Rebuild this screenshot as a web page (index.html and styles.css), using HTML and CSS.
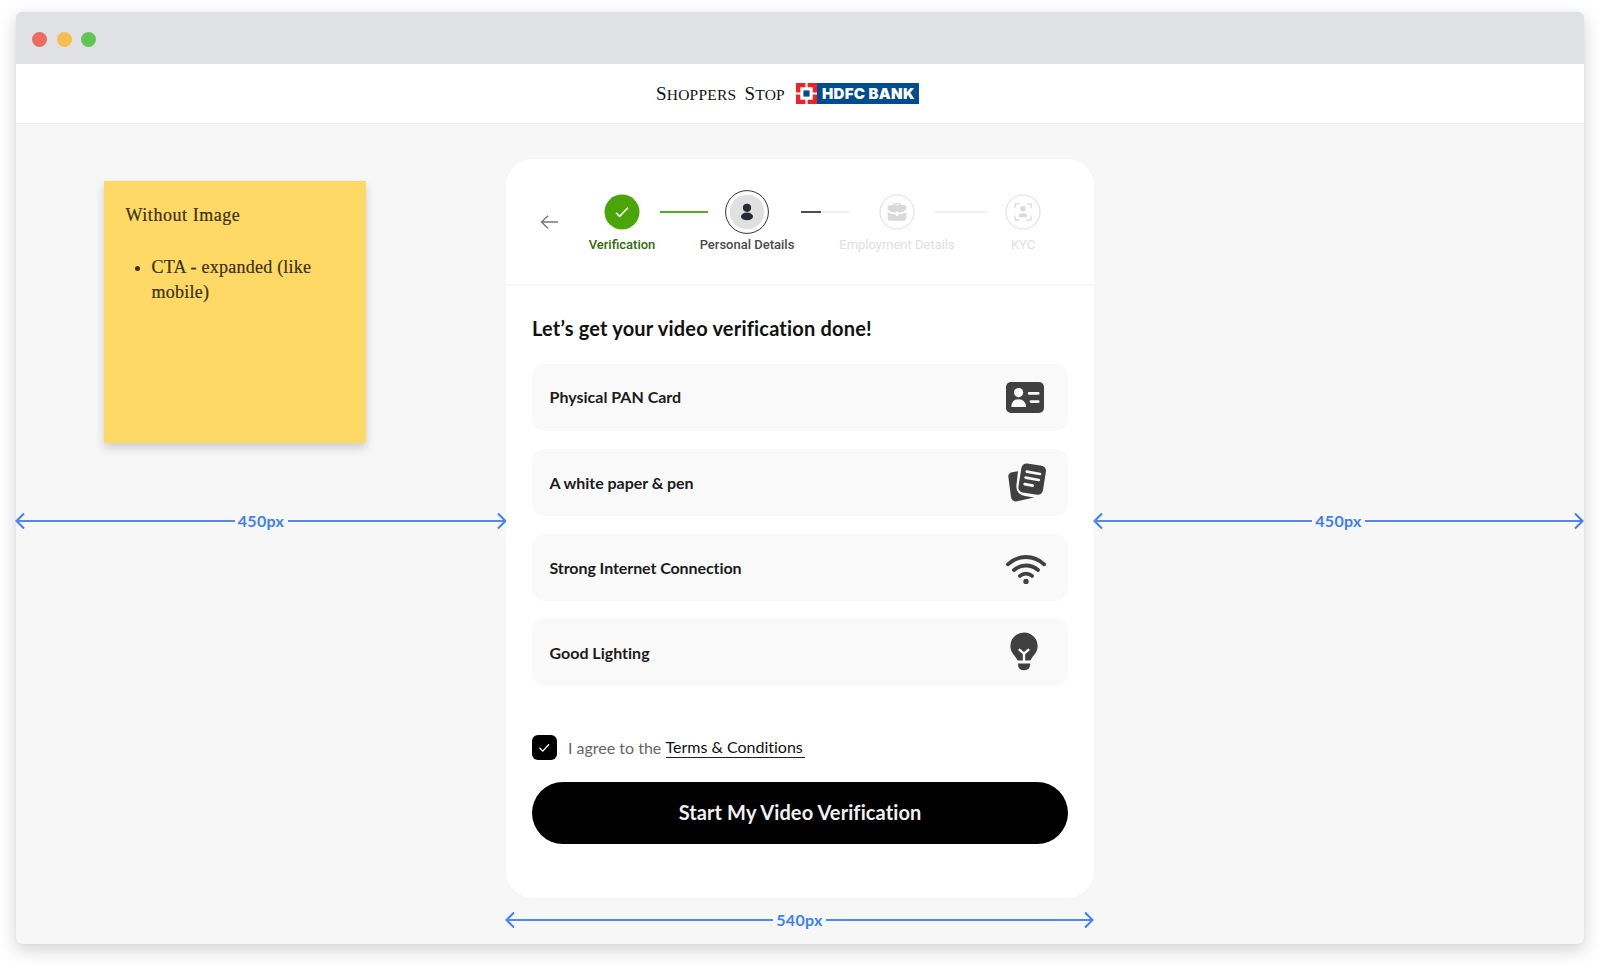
FILE: index.html
```html
<!DOCTYPE html>
<html lang="en">
<head>
<meta charset="utf-8">
<title>Video verification</title>
<link rel="stylesheet" href="styles.css">
</head>
<body>
<div class="window">
  <div class="titlebar"><i class="dot red"></i><i class="dot amber"></i><i class="dot green"></i></div>
  <header class="brand">
    <span class="shoppers"><b>S</b>hoppers <b>S</b>top</span>
    <span class="hdfc">
      <svg width="21" height="21" viewBox="0 0 21 21"><path fill="#ed232a" d="M0 0h21v21H0z"/><path fill="#fff" d="M9.4 0h2.2v21H9.4zM0 9.4h21v2.2H0z"/><path fill="#fff" d="M4.3 4.3h12.4v12.4H4.3z"/><path fill="#004c8f" d="M7.4 7.4h6.2v6.2H7.4z"/></svg>
      <span class="hdfc-name">HDFC BANK</span>
    </span>
  </header>
  <main class="canvas">
    <aside class="side left">
      <div class="note">
        <p>Without Image</p>
        <ul><li>CTA - expanded (like<br>mobile)</li></ul>
      </div>
      <div class="measure">
        <svg class="head" width="10" height="18" viewBox="0 0 10 18"><path d="M9 1.5 1.5 9 9 16.5"/></svg><i class="rule"></i><span>450px</span><i class="rule"></i><svg class="head" width="10" height="18" viewBox="0 0 10 18"><path d="M1 1.5 8.5 9 1 16.5"/></svg>
      </div>
    </aside>
    <div class="center">
      <section class="card">
        <div class="steps">
          <svg class="back" width="19" height="16" viewBox="0 0 19 16"><path d="M18 8H1.5M8 1.8 1.5 8 8 14.2"/></svg>
          <div class="step done"><div class="ring"><svg width="44" height="44" viewBox="0 0 44 44"><circle cx="22" cy="22" r="17.5" fill="#4aa508"/><path d="M16 22.8l3.6 3.6 8.4-8.6" fill="none" stroke="#fff" stroke-width="1.6"/></svg></div><span>Verification</span></div>
          <i class="link full"></i>
          <div class="step active"><div class="ring"><svg width="44" height="44" viewBox="0 0 44 44"><circle cx="22" cy="22" r="21.4" fill="#fff" stroke="#333" stroke-width="1"/><circle cx="22" cy="22" r="17.3" fill="#e0e0e0"/><circle cx="22" cy="17.8" r="4.1" fill="#262a33"/><ellipse cx="22" cy="26.4" rx="6" ry="3.9" fill="#262a33"/></svg></div><span>Personal Details</span></div>
          <i class="link half"></i>
          <div class="step todo"><div class="ring"><svg width="44" height="44" viewBox="0 0 44 44"><circle cx="22" cy="22" r="17" fill="#fff" stroke="#dcdcdc"/><path d="M18.4 16v-.8q0-1.500 1.500-1.500h4.200q1.500 0 1.500 1.500v.8" fill="none" stroke="#d9d9d9" stroke-width="1.500"/><path fill="#d9d9d9" d="M14.800 15.300h14.400q2.300 0 2.300 2.300v2.200q-3.500 2.700-7.500 3-.6-1.400-2-1.400t-2 1.400q-4-.3-7.500-3v-2.200q0-2.300 2.300-2.300z"/><path fill="#d9d9d9" d="M12.700 22.300q3.500 1.800 7.600 2 .5 1.700 1.700 1.700t1.700-1.700q4.100-.2 7.600-2v6.200q-.1 2.200-2.300 2.200H15q-2.200 0-2.300-2.200z"/></svg></div><span>Employment Details</span></div>
          <i class="link none"></i>
          <div class="step todo"><div class="ring"><svg width="44" height="44" viewBox="0 0 44 44"><circle cx="22" cy="22" r="17" fill="#fff" stroke="#dcdcdc"/><path d="M18.500 13.800H14v4.500M25.500 13.800H30v4.500M18.500 30H14v-4.500M25.500 30H30v-4.500" fill="none" stroke="#d9d9d9" stroke-width="1.300" stroke-linejoin="round"/><circle cx="22" cy="18.800" r="2.700" fill="#d9d9d9"/><path fill="#d9d9d9" d="M18 27.300V26q0-2.800 2.800-2.800h2.400q2.800 0 2.800 2.800v1.300z"/></svg></div><span>KYC</span></div>
        </div>
        <div class="body">
          <h1>Let’s get your video verification done!</h1>
          <ul class="items">
            <li><span class="t1">Physical PAN Card</span>
              <svg width="44" height="45" viewBox="0 0 44 45"><rect x="2" y="7" width="38" height="31" rx="5" fill="#404040"/><circle cx="14.6" cy="17.6" r="4.6" fill="#f9f9f9"/><path fill="#f9f9f9" d="M7.3 32q.4-7.7 7.3-7.7T22 32z"/><path d="M25.2 18.4h9M27 26.6h7.2" stroke="#f9f9f9" stroke-width="2.8" stroke-linecap="round"/></svg></li>
            <li><span class="t2">A white paper &amp; pen</span>
              <svg width="44" height="45" viewBox="0 0 44 45"><path fill="#404040" d="M14 11.2 8 12.300Q4 13.200 4.300 16.600L7 37.100Q8 41.600 12 41.400L30 37.600 21 36.100Q11.300 34.100 12.500 24.600z"/><rect x="15.800" y="4.500" width="24.800" height="29.200" rx="5" fill="#404040" transform="rotate(9 28 19.100)"/><path d="M22.800 11.600 36 14M21.600 17.600 34.800 20M20.700 24.200 28.800 25.600" stroke="#f9f9f9" stroke-width="2.700" stroke-linecap="round"/></svg></li>
            <li><span class="t3">Strong Internet Connection</span>
              <svg width="44" height="45" viewBox="0 0 44 45"><g fill="none" stroke="#404040" stroke-width="3.8" stroke-linecap="round"><path d="M3.8 19.300Q12 12 22 12t18.200 7.300M10 25q5.200-4.500 12-4.500t12 4.500M16 30.900q2.500-2.200 6-2.200t6 2.200"/></g><circle cx="22" cy="36.400" r="2.700" fill="#404040"/></svg></li>
            <li><span class="t4">Good Lighting</span>
              <svg width="44" height="45" viewBox="0 0 44 45"><path fill="#404040" d="M20 3.500a13.600 13.600 0 0 1 13.600 13.700c0 5.800-3.600 8.300-6 12.300-.7 1.300-.8 2-2 2H14.400c-1.200 0-1.300-.7-2-2-2.400-4-6-6.500-6-12.300A13.600 13.600 0 0 1 20 3.500zM14 34.500h12.300q0 6.800-6.200 6.800T14 34.500z"/><path d="M15.600 20.800 20 24.600l4.400-3.800M20 24.600v7.400" fill="none" stroke="#f9f9f9" stroke-width="2.400" stroke-linecap="round"/></svg></li>
          </ul>
          <div class="agree">
            <span class="check"><svg width="25" height="25" viewBox="0 0 25 25"><path d="M7.500 12.800l3.300 3.300 6.200-6.800" fill="none" stroke="#fff" stroke-width="1.300"/></svg></span>
            <span class="lead">I agree to the</span><a>Terms &amp; Conditions</a>
          </div>
          <button class="cta">Start My Video Verification</button>
        </div>
      </section>
      <div class="measure">
        <svg class="head" width="10" height="18" viewBox="0 0 10 18"><path d="M9 1.5 1.5 9 9 16.5"/></svg><i class="rule"></i><span>540px</span><i class="rule"></i><svg class="head" width="10" height="18" viewBox="0 0 10 18"><path d="M1 1.5 8.5 9 1 16.5"/></svg>
      </div>
    </div>
    <aside class="side right">
      <div class="measure">
        <svg class="head" width="10" height="18" viewBox="0 0 10 18"><path d="M9 1.5 1.5 9 9 16.5"/></svg><i class="rule"></i><span>450px</span><i class="rule"></i><svg class="head" width="10" height="18" viewBox="0 0 10 18"><path d="M1 1.5 8.5 9 1 16.5"/></svg>
      </div>
    </aside>
  </main>
</div>
</body>
</html>
```
FILE: styles.css
```css
* { box-sizing: border-box; }
body { margin: 0; padding: 12px 16px; height: 966px; overflow: hidden; background: #fff; font-family: Lato, sans-serif; font-variant-ligatures: none; }
p, h1, ul { margin: 0; padding: 0; }
ul { list-style: none; }
svg { display: block; flex: none; }
.window { height: 932px; border-radius: 6px; background: #f7f7f7; box-shadow: 0 6px 18px rgba(0,0,0,.18), 0 0 2px rgba(0,0,0,.06); display: flex; flex-direction: column; }
.titlebar { height: 52px; background: #dfe1e5; border-radius: 6px 6px 0 0; display: flex; align-items: center; gap: 9.5px; padding: 2px 0 0 16px; }
.dot { width: 15px; height: 15px; border-radius: 50%; }
.red { background: #ed6b60; }
.amber { background: #f5be4f; }
.green { background: #62c655; }
.brand { height: 60px; background: #fff; border-bottom: 1px solid #efefef; display: flex; padding: 19px 0 0 640px; }
.shoppers { width: 140px; font: 15.5px/22px "Liberation Serif", serif; letter-spacing: .22px; text-transform: uppercase; color: #111; white-space: nowrap; word-spacing: 4px; }
.shoppers b { font-weight: 400; font-size: 19px; }
.hdfc { width: 123px; height: 21px; background: #004c8f; display: flex; align-items: center; gap: 5px; }
.hdfc-name { color: #fff; font: 900 15px/21px Inter, sans-serif; letter-spacing: .3px; white-space: nowrap; }

.canvas { flex: 1; display: grid; grid-template-columns: 490px 588px 490px; }
.side { display: flex; flex-direction: column; }
.left { padding-top: 57px; }
.right { padding-top: 388px; }
.note { width: 262px; height: 262px; margin: 0 0 69px 87.5px; padding: 22px; background: #ffd966; box-shadow: 0 5px 9px rgba(0,0,0,.17); color: #3a3010; font: 18px/25.6px "Liberation Serif", serif; -webkit-text-stroke: .2px #3a3010; }
.note p { letter-spacing: .55px; }
.note ul { margin-top: 26px; padding-left: 26px; list-style: disc; letter-spacing: .24px; }
.measure { height: 18px; display: flex; align-items: center; color: #3d7df6; font-size: 16px; font-weight: 700; line-height: 18px; }
.side .measure { margin: 0 -1px; }
.center .measure { margin: 13px 0 0 -1px; }
.right .measure { margin-right: 0; }
.measure span { width: 53px; text-align: center; letter-spacing: .3px; }
.head { fill: none; stroke: #3d7df6; stroke-width: 2; }
.head:first-child { margin-right: -9px; }
.head:last-child { margin-left: -9px; }
.rule { flex: 1; height: 2px; background: #4e88f7; }

.card { margin-top: 35px; height: 739px; border-radius: 27px; background: #fff; }
.steps { height: 127px; border-bottom: 2px solid #f7f7f7; display: flex; align-items: flex-start; padding: 30.5px 0 0 34px; }
.back { fill: none; stroke: #777; stroke-width: 1.4; margin-top: 24.5px; }
.step { display: flex; flex-direction: column; align-items: center; font: 500 13px/16px Roboto, sans-serif; white-space: nowrap; width: 44px; }
.step span { margin-top: 3px; }
.done { margin-left: 41px; color: #2f6b08; }
.active { color: #4a4a4a; }
.todo { color: #dedede; font-weight: 400; }
.link { height: 2px; margin-top: 21px; }
.full { width: 48px; margin: 21px 17px 0 16px; background: #52b01c; }
.half { width: 48px; margin: 21px 26px 0 32px; background: linear-gradient(90deg, #4d4d4d 20px, #efefef 20px); }
.none { width: 52px; margin: 21px 14px 0 16px; background: #efefef; }

.body { padding: 0 26px; display: flex; flex-direction: column; }
h1 { margin-top: 28px; font-size: 20px; line-height: 28px; font-weight: 700; letter-spacing: .2px; color: #111; white-space: nowrap; }
.items { margin-top: 22px; display: flex; flex-direction: column; gap: 17.6px; }
.items li { height: 67.2px; border-radius: 13px; background: #f9f9f9; display: flex; align-items: center; justify-content: space-between; padding: 0 20px 0 17.5px; font-size: 16px; font-weight: 700; color: #1c1c1c; white-space: nowrap; }
.items .t1 { padding-bottom: 2px; }
.items .t2 { letter-spacing: -.04px; }
.items .t3 { letter-spacing: -.08px; }
.items .t4 { padding-top: 1px; }
.agree { margin-top: 49px; height: 25px; display: flex; align-items: center; font-size: 16px; line-height: 20px; white-space: nowrap; }
.check { width: 25px; height: 25px; border-radius: 6px; background: #000; }
.lead { width: 97.5px; margin: 1px 0 0 11px; color: #666; }
.agree a { width: 139px; border-bottom: 1.5px solid #222; color: #111; }
.cta { margin-top: 22px; height: 62px; padding: 0 0 2px; border: 0; border-radius: 31px; background: #000; color: #f2f2f2; font: 700 20px/24px Lato, sans-serif; letter-spacing: .1px; }
```
